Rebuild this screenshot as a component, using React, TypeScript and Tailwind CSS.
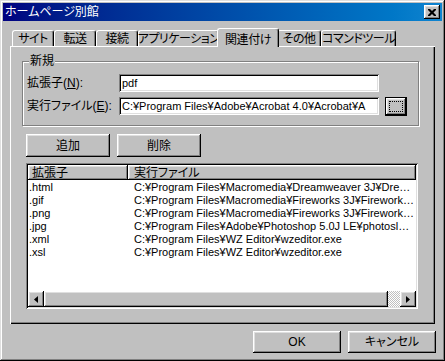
import React from "react";

const FONT =
  "font-['Liberation_Sans','Noto_Sans_CJK_JP',sans-serif] [font-feature-settings:'palt'] text-[11px] whitespace-nowrap text-black";

// win98-style bevels
const RAISED =
  "shadow-[inset_-1px_-1px_#000,inset_1px_1px_#fff,inset_-2px_-2px_#808080,inset_2px_2px_#dfdfdf]";
const SUNKEN =
  "shadow-[inset_1px_1px_#808080,inset_-1px_-1px_#fff,inset_2px_2px_#000,inset_-2px_-2px_#dfdfdf]";

const TABS = [
  { label: "サイト", w: "w-[42px]" },
  { label: "転送", w: "w-[42px]" },
  { label: "接続", w: "w-[42px]" },
  { label: "アプリケーション", w: "w-[81px]" },
  { label: "関連付け", w: "w-[58px]", active: true },
  { label: "その他", w: "w-[44px]" },
  { label: "コマンドツール", w: "w-[75px]" },
];

const ROWS = [
  [".html", "C:¥Program Files¥Macromedia¥Dreamweaver 3J¥Dreamweaver.exe"],
  [".gif", "C:¥Program Files¥Macromedia¥Fireworks 3J¥Fireworks3.exe"],
  [".png", "C:¥Program Files¥Macromedia¥Fireworks 3J¥Fireworks3.exe"],
  [".jpg", "C:¥Program Files¥Adobe¥Photoshop 5.0J LE¥photosle.exe"],
  [".xml", "C:¥Program Files¥WZ Editor¥wzeditor.exe"],
  [".xsl", "C:¥Program Files¥WZ Editor¥wzeditor.exe"],
];

function Tab({ label, w, active }: { label: string; w: string; active?: boolean }) {
  if (active) {
    return (
      <div className={`${w} relative z-10 h-[19px] -mb-px`}>
        <div className="absolute -left-[2px] -right-[2px] top-0 bottom-0 bg-[#c0c0c0] border-l border-t border-white border-r border-r-black rounded-t-[3px] shadow-[inset_-1px_0_#808080] flex items-start justify-center pt-[2px] text-[12px] tracking-[-0.4px]">
          {label}
        </div>
      </div>
    );
  }
  return (
    <div
      className={`${w} h-[16px] bg-[#c0c0c0] border-l border-t border-white border-r border-r-black rounded-t-[3px] shadow-[inset_-1px_0_#808080] flex items-center justify-center text-[12px] tracking-[-0.5px]`}
    >
      {label}
    </div>
  );
}

function Button({ children, className = "" }: { children: React.ReactNode; className?: string }) {
  return (
    <div className={`${RAISED} bg-[#c0c0c0] flex items-center justify-center ${className}`}>
      {children}
    </div>
  );
}

function Arrow({ dir }: { dir: "left" | "right" }) {
  return (
    <svg width="4" height="7" viewBox="0 0 4 7" className="block">
      {dir === "left" ? (
        <path d="M4 0 L0 3.5 L4 7 Z" fill="#000" />
      ) : (
        <path d="M0 0 L4 3.5 L0 7 Z" fill="#000" />
      )}
    </svg>
  );
}

export default function App() {
  return (
    <div className={`${FONT} w-[445px] h-[361px] bg-[#c0c0c0] p-[3px] flex flex-col shadow-[inset_-1px_-1px_#000,inset_1px_1px_#dfdfdf,inset_-2px_-2px_#808080,inset_2px_2px_#fff]`}>
      {/* title bar */}
      <div className="h-[18px] bg-linear-to-r from-[#000080] to-[#1084d0] flex items-center justify-between pl-[2px] pr-[2px]">
        <span className="text-white text-[12px] leading-none">ホームページ別館</span>
        <div className={`${RAISED} bg-[#c0c0c0] w-[16px] h-[14px] flex items-center justify-center`}>
          <svg width="8" height="7" viewBox="0 0 8 7">
            <path d="M0 0h2l2 2 2-2h2v1L5.5 3.5 8 6v1H6L4 5 2 7H0V6l2.5-2.5L0 1z" fill="#000" />
          </svg>
        </div>
      </div>

      <div className="flex-1 flex flex-col px-[7px] pt-[7px]">
        {/* tabs */}
        <div className="h-[18px] flex items-end pl-[2px]">
          {TABS.map((t) => (
            <Tab key={t.label} {...t} />
          ))}
        </div>

        {/* tab panel */}
        <div className="w-[425px] h-[278px] bg-[#c0c0c0] shadow-[inset_1px_1px_#fff,inset_-1px_-1px_#000,inset_-2px_-2px_#808080] pl-[12px] pt-[15px] flex flex-col">
          {/* group box */}
          <div className="relative w-[397px] h-[65px] border border-[#808080] shadow-[inset_1px_1px_#fff,1px_1px_#fff] pt-[12px] pl-[4px] flex flex-col gap-[5px]">
            <span className="absolute -top-[8px] left-[6px] bg-[#c0c0c0] px-[1px] text-[12px] leading-[14px]">
              新規
            </span>
            <div className="flex items-center h-[18px]">
              <span className="w-[92px] shrink-0 text-[12px]">
                拡張子(<u>N</u>):
              </span>
              <div className={`${SUNKEN} bg-white w-[260px] h-[18px] flex items-center pl-[3px]`}>
                pdf
              </div>
            </div>
            <div className="flex items-center h-[18px]">
              <span className="w-[92px] shrink-0 text-[12px]">
                実行ファイル(<u>E</u>):
              </span>
              <div className={`${SUNKEN} bg-white w-[260px] h-[18px] flex items-center pl-[3px] overflow-hidden`}>
                C:¥Program Files¥Adobe¥Acrobat 4.0¥Acrobat¥A
              </div>
              <div className="ml-[6px] w-[22px] h-[19px] border border-black">
                <div className={`${RAISED} bg-[#c0c0c0] w-full h-full p-[3px]`}>
                  <div className="w-full h-full border border-dotted border-black" />
                </div>
              </div>
            </div>
          </div>

          {/* add / delete */}
          <div className="flex gap-[7px] ml-[4px] mt-[8px]">
            <Button className="w-[84px] h-[23px] text-[12px]">追加</Button>
            <Button className="w-[84px] h-[23px] text-[12px]">削除</Button>
          </div>

          {/* list view */}
          <div className={`${SUNKEN} bg-white ml-[4px] mt-[6px] w-[392px] h-[146px] p-[2px] flex flex-col`}>
            <div className="h-[15px] flex">
              <div className={`${RAISED} bg-[#c0c0c0] w-[100px] flex items-center pl-[4px] text-[12px]`}>
                拡張子
              </div>
              <div className={`${RAISED} bg-[#c0c0c0] flex-1 flex items-center pl-[6px] text-[12px]`}>
                実行ファイル
              </div>
            </div>
            <div className="flex-1 flex flex-col pt-[1px]">
              {ROWS.map(([ext, path]) => (
                <div key={ext} className="h-[13px] flex items-center leading-none">
                  <span className="w-[100px] shrink-0 pl-[1px]">{ext}</span>
                  <span className="flex-1 min-w-0 pl-[6px] pr-[1px] overflow-hidden text-ellipsis">{path}</span>
                </div>
              ))}
            </div>
            {/* horizontal scrollbar */}
            <div className="h-[16px] flex bg-[#c0c0c0]">
              <div className={`${RAISED} w-[16px] h-full flex items-center justify-center`}>
                <Arrow dir="left" />
              </div>
              <div className={`${RAISED} flex-1 h-full`} />
              <div className="w-[12px] h-full bg-[repeating-conic-gradient(#c0c0c0_0%_25%,#fff_0%_50%)] bg-[length:2px_2px]" />
              <div className={`${RAISED} w-[16px] h-full flex items-center justify-center`}>
                <Arrow dir="right" />
              </div>
            </div>
          </div>
        </div>

        {/* OK / cancel */}
        <div className="flex justify-end gap-[7px] mt-[7px] -mr-px">
          <Button className="w-[88px] h-[22px] text-[12px]">OK</Button>
          <Button className="w-[88px] h-[22px] text-[12px]">キャンセル</Button>
        </div>
      </div>
    </div>
  );
}
